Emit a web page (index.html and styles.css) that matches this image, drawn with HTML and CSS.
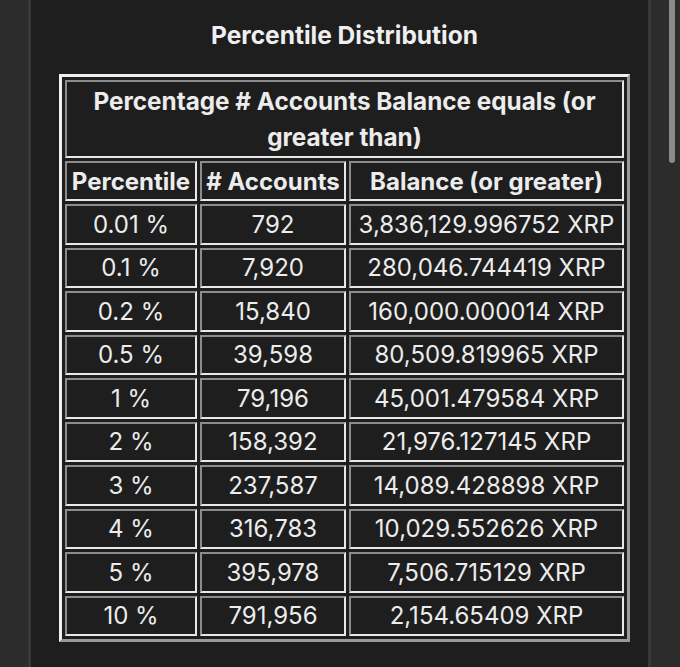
FILE: index.html
```html
<!DOCTYPE html>
<html>
<head>
<meta charset="utf-8">
<link rel="stylesheet" href="styles.css">
</head>
<body>
<div class="frame">
  <div class="side side-left"></div>
  <main class="panel">
    <h1 class="title">Percentile Distribution</h1>
    <table class="dist">
      <colgroup>
        <col class="c1"><col class="c2"><col class="c3">
      </colgroup>
      <tr><th colspan="3" class="caption">Percentage # Accounts Balance equals (or greater than)</th></tr>
      <tr class="head"><th>Percentile</th><th># Accounts</th><th>Balance (or greater)</th></tr>
      <tr><td>0.01 %</td><td>792</td><td>3,836,129.996752 XRP</td></tr>
      <tr><td>0.1 %</td><td>7,920</td><td>280,046.744419 XRP</td></tr>
      <tr><td>0.2 %</td><td>15,840</td><td>160,000.000014 XRP</td></tr>
      <tr><td>0.5 %</td><td>39,598</td><td>80,509.819965 XRP</td></tr>
      <tr><td>1 %</td><td>79,196</td><td>45,001.479584 XRP</td></tr>
      <tr><td>2 %</td><td>158,392</td><td>21,976.127145 XRP</td></tr>
      <tr><td>3 %</td><td>237,587</td><td>14,089.428898 XRP</td></tr>
      <tr><td>4 %</td><td>316,783</td><td>10,029.552626 XRP</td></tr>
      <tr><td>5 %</td><td>395,978</td><td>7,506.715129 XRP</td></tr>
      <tr><td>10 %</td><td>791,956</td><td>2,154.65409 XRP</td></tr>
    </table>
  </main>
  <div class="side side-right"><div class="thumb"></div></div>
</div>
</body>
</html>
```
FILE: styles.css
```css
html, body {
  margin: 0;
  padding: 0;
  background: #1e1e1e;
}
body {
  font-family: Inter, "Noto Sans", "Liberation Sans", sans-serif;
  color: #ececec;
}
.frame {
  display: flex;
  width: 680px;
  height: 667px;
  overflow: hidden;
}
.side {
  background: #2c2c2c;
  flex: none;
}
.side-left {
  width: 28px;
  border-right: 3px solid #393939;
}
.side-right {
  width: 32px;
  border-left: 3px solid #393939;
  padding-left: 18px;
  box-sizing: border-box;
}
.thumb {
  width: 6px;
  height: 163px;
  background: #8a8a8a;
  border-radius: 0 0 3px 3px;
}
.panel {
  flex: none;
  width: 617px;
  box-sizing: border-box;
  padding: 0 18px 0 28px;
  background: #1e1e1e;
}
.title {
  margin: 0;
  padding-top: 20px;
  height: 74px;
  box-sizing: border-box;
  text-align: center;
  font-size: 24.5px;
  font-weight: 700;
  line-height: 30px;
  color: #efefef;
}
.dist {
  width: 571px;
  table-layout: fixed;
  border-collapse: separate;
  border-spacing: 3px;
  border-style: solid;
  border-width: 3px;
  border-color: #f0f0f0 #9a9a9a #9a9a9a #f0f0f0;
}
.c1 { width: 132px; }
.c2 { width: 146px; }
.c3 { width: 275px; }
.dist th, .dist td {
  border-style: solid;
  border-width: 2px;
  border-color: #8c8c8c #e8e8e8 #e8e8e8 #8c8c8c;
  text-align: center;
  padding: 0;
  font-size: 24px;
  white-space: nowrap;
}
.dist td {
  height: 40.5px;
  box-sizing: border-box;
  font-weight: 400;
}
.dist th {
  font-weight: 700;
}
.dist .caption {
  height: 78px;
  box-sizing: border-box;
  white-space: normal;
  line-height: 36px;
  padding: 0 12px;
  font-size: 24.3px;
}
.head th {
  height: 40px;
  box-sizing: border-box;
}
```
